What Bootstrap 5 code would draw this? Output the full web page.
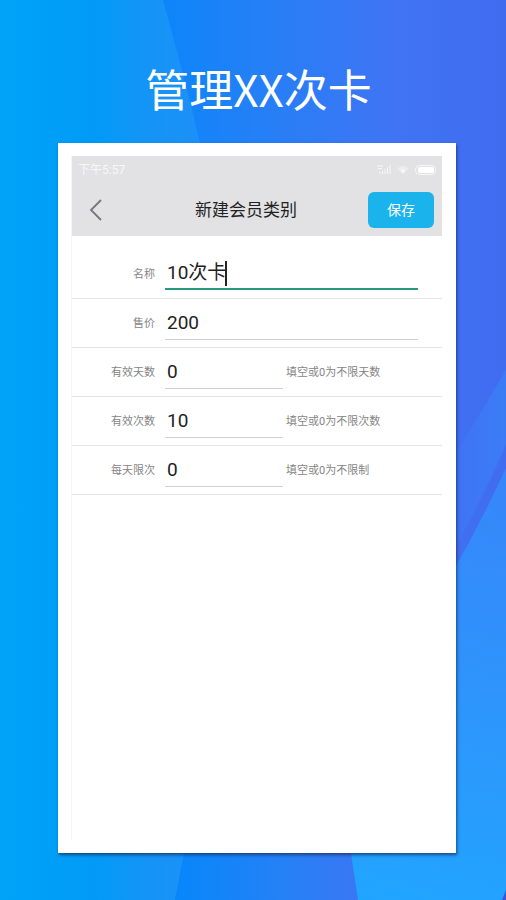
<!DOCTYPE html>
<html lang="zh-CN">
<head>
<meta charset="utf-8">
<meta name="viewport" content="width=device-width, initial-scale=1">
<title>管理XX次卡</title>
<link href="https://cdn.jsdelivr.net/npm/bootstrap@5.3.0/dist/css/bootstrap.min.css" rel="stylesheet">
<style>
  body { font-family: Roboto, "Noto Sans CJK SC", sans-serif; background: #1a8af8; }
  .promo { padding: 0 50px 47px 58px; isolation: isolate; }
  .backdrop { position: absolute; inset: 0; width: 100%; height: 100%; z-index: -1; }
  .promo-title { font-family: "Noto Sans CJK SC", sans-serif; font-size: 44px; line-height: 64px; padding: 56px 0 23px 3px; }
  .sheet { padding: 13px 14px 13px 13px; box-shadow: 1px 2px 3px rgba(20, 40, 90, .7); }
  .phone { border-left: 1px solid #f6f6f6; }
  .topbar { background: #e2e2e5; height: 80px; }
  .status { font-size: 12px; line-height: 16px; padding: 6px 5px 0 6px; color: #f7f7f8; }
  .bar { display: grid; grid-template-columns: 44px 1fr 66px; padding: 14px 8px 7px; }
  .bar h2 { font-size: 17px; line-height: 24px; color: #222; }
  .back { width: 32px; height: 36px; }
  .save { background: #1ab3ec; border: 0; border-radius: 6px; height: 36px; font-size: 14px; line-height: 20px; color: #fff; }
  .form-rows { padding-top: 14px; }
  .line { height: 49px; border-bottom: 1px solid #e4e4e4; font-size: 11px; color: #858585; }
  .line label { width: 83px; margin-right: 10px; padding-top: 2px; }
  .line .hint { margin-left: 3px; padding-top: 2px; white-space: nowrap; }
  .field { height: 33px; border-bottom: 1px solid #d0d0d0; }
  .field.wide { flex: 1; margin-right: 24px; }
  .field.half { width: 118px; }
  .field.active { height: 32px; border-bottom: 2px solid #26997f; }
  .field input { border: 0; outline: 0; background: none; padding: 0 0 0 2px; width: 100%; height: 32px; font-size: 19px; line-height: 28px; color: #222; }
  .field.active input { width: 60px; height: 28px; }
  .caret-bar { width: 2px; height: 25px; background: #222; }
</style>
<script src="https://cdn.jsdelivr.net/npm/bootstrap@5.3.0/dist/js/bootstrap.bundle.min.js"></script>
</head>
<body>
<main class="promo position-relative d-flex flex-column min-vh-100">
  <svg class="backdrop" viewBox="0 0 506 900" preserveAspectRatio="none" aria-hidden="true">
    <defs>
      <linearGradient id="base" x1="0" y1="0" x2="506" y2="0" gradientUnits="userSpaceOnUse">
        <stop offset=".3" stop-color="#0a86fb"/><stop offset=".5" stop-color="#2380f6"/><stop offset=".78" stop-color="#4074f4"/><stop offset="1" stop-color="#406cf0"/>
      </linearGradient>
      <linearGradient id="left" x1="0" y1="0" x2="200" y2="0" gradientUnits="userSpaceOnUse">
        <stop offset="0" stop-color="#00a3f8"/><stop offset=".45" stop-color="#019bf7"/><stop offset=".75" stop-color="#1594f6"/><stop offset="1" stop-color="#1d90f7"/>
      </linearGradient>
      <linearGradient id="band" x1="456" y1="0" x2="506" y2="0" gradientUnits="userSpaceOnUse">
        <stop offset="0" stop-color="#3f74f4"/><stop offset="1" stop-color="#3b7cf5"/>
      </linearGradient>
      <linearGradient id="corner" x1="370" y1="900" x2="510" y2="450" gradientUnits="userSpaceOnUse">
        <stop offset="0" stop-color="#20a5ff"/><stop offset=".35" stop-color="#2b99fd"/><stop offset="1" stop-color="#3884f8"/>
      </linearGradient>
      <linearGradient id="floor" x1="175" y1="0" x2="358" y2="0" gradientUnits="userSpaceOnUse">
        <stop offset="0" stop-color="#0787fa"/><stop offset=".65" stop-color="#2880f6"/><stop offset="1" stop-color="#3a77f3"/>
      </linearGradient>
    </defs>
    <rect width="506" height="900" fill="url(#base)"/>
    <path d="M0 0H163Q184 75 200 143Q250 500 184 853L175 900H0Z" fill="url(#left)"/>
    <path d="M506 370Q484 408 456 452V546Q486 492 506 444Z" fill="url(#band)"/>
    <path d="M175 900L184 853V800H351V853L358 900Z" fill="url(#floor)"/>
    <path d="M506 468Q482 520 456 566L340 700Q345 800 351 853L358 900H506Z" fill="url(#corner)"/>
    <path d="M506 890L502 900H506Z" fill="#3c55d8"/>
  </svg>

  <h1 class="promo-title text-white text-center fw-normal m-0">管理XX次卡</h1>

  <section class="sheet bg-white flex-grow-1 d-flex flex-column">
    <div class="phone flex-grow-1">
      <header class="topbar">
        <div class="status d-flex justify-content-between align-items-center">
          <span>下午5:57</span>
          <svg width="60" height="12" viewBox="0 0 60 12" fill="none" stroke="#f7f7f8" aria-hidden="true">
            <path d="M0 2H6M1 4.500H5M3 10V8M5.500 10V7M8 10V5M10.500 10V3M13 10V1"/>
            <path d="M21 4.500Q26 0 31 4.500L26 10Z" fill="#ececee" stroke="#ececee"/>
            <path d="M23.500 6.500Q26 4 28.500 6.500L26 9Z" fill="#f7f7f8" stroke="none"/>
            <rect x="38.500" y="1.500" width="20" height="9" rx="4"/>
            <rect x="41" y="3" width="16" height="6" rx="2" fill="#fff" stroke="none"/>
          </svg>
        </div>
        <div class="bar align-items-center">
          <button type="button" class="back btn p-0 border-0 d-flex align-items-center justify-content-center" aria-label="返回">
            <svg width="14" height="22" viewBox="0 0 14 22" fill="none" stroke="#77777b" stroke-width="1.800"><path d="M12 1L2 11L12 21"/></svg>
          </button>
          <h2 class="m-0 fw-normal text-center">新建会员类别</h2>
          <button type="submit" form="card-type" class="save btn p-0">保存</button>
        </div>
      </header>

      <form id="card-type" class="form-rows">
        <div class="line d-flex align-items-center">
          <label for="name" class="text-end">名称</label>
          <div class="field wide active d-flex align-items-center"><input id="name" type="text" value="10次卡"><span class="caret-bar"></span></div>
        </div>
        <div class="line d-flex align-items-center">
          <label for="price" class="text-end">售价</label>
          <div class="field wide"><input id="price" type="text" value="200"></div>
        </div>
        <div class="line d-flex align-items-center">
          <label for="days" class="text-end">有效天数</label>
          <div class="field half"><input id="days" type="text" value="0"></div>
          <span class="hint">填空或0为不限天数</span>
        </div>
        <div class="line d-flex align-items-center">
          <label for="times" class="text-end">有效次数</label>
          <div class="field half"><input id="times" type="text" value="10"></div>
          <span class="hint">填空或0为不限次数</span>
        </div>
        <div class="line d-flex align-items-center">
          <label for="daily" class="text-end">每天限次</label>
          <div class="field half"><input id="daily" type="text" value="0"></div>
          <span class="hint">填空或0为不限制</span>
        </div>
      </form>
    </div>
  </section>
</main>
</body>
</html>
